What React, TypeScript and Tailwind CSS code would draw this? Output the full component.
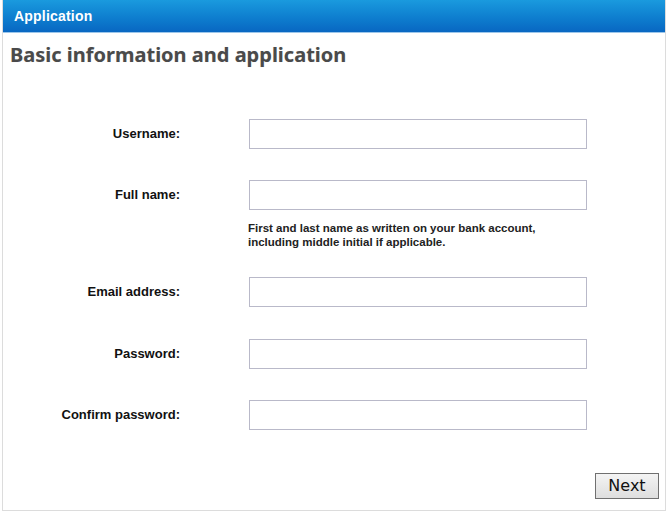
import React from "react";

const fields = [
  { label: "Username:", type: "text", gap: "mb-[31px]" },
  { label: "Full name:", type: "text", gap: "mb-[31px]", help: true },
  { label: "Email address:", type: "email", gap: "mb-[32px]" },
  { label: "Password:", type: "password", gap: "mb-[31px]" },
  { label: "Confirm password:", type: "password", gap: "mb-[31px]" },
];

export default function App() {
  return (
    <div className="w-[667px] h-[512px] bg-white" style={{ fontFamily: '"Liberation Sans", Arial, sans-serif' }}>
      <div className="ml-[2px] w-[664px] h-[511px] flex flex-col border-x border-b border-[#dcdcdc]">
        {/* header bar */}
        <div className="h-[33px] shrink-0 bg-gradient-to-b from-[#1a9ade] to-[#0967c2] border-b border-[#9cc6ea] flex items-center pl-[11px]">
          <span className="text-white font-bold text-[14px] tracking-[0.2px]">Application</span>
        </div>

        <h1
          className="mt-[8px] pl-[7px] text-[20px] leading-[28px] font-bold text-[#4a4a4a]"
          style={{ fontFamily: '"Noto Sans", "Open Sans", sans-serif', textShadow: "0 0 1px rgba(0,0,0,0.15)" }}
        >
          Basic information and application
        </h1>

        <div className="mt-[50px] flex flex-col">
          {fields.map((f) => (
            <div key={f.label} className={`${f.gap} flex flex-col`}>
              <div className="flex items-center">
                <label className="w-[177px] text-right text-[13px] font-bold text-[#111]">{f.label}</label>
                <input
                  type={f.type}
                  className="ml-[69px] w-[338px] h-[30px] border border-[#b9b9c9] bg-white outline-none"
                />
              </div>
              {f.help && (
                <p className="ml-[245px] mt-[11px] -mb-[3px] text-[11.5px] leading-[14px] font-bold text-[#222]">
                  First and last name as written on your bank account,
                  <br />
                  including middle initial if applicable.
                </p>
              )}
            </div>
          ))}
        </div>

        <div className="mt-auto mb-[11px] flex justify-end pr-[6px]">
          <button
            className="w-[64px] h-[26px] border border-[#707070] bg-gradient-to-b from-[#f4f4f4] to-[#dedede] text-[16px] text-[#111] leading-none"
            style={{ fontFamily: '"DejaVu Sans", sans-serif' }}
          >
            Next
          </button>
        </div>
      </div>
    </div>
  );
}
